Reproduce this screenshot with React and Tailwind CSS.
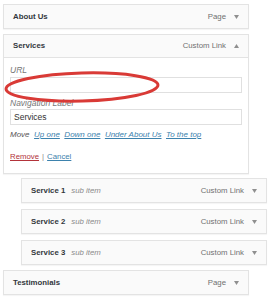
import React from 'react';

const Arrow = ({ up }) => (
  <svg width="5" height="4" viewBox="0 0 5 4" className="ml-[8px]">
    {up ? <path d="M0 4 L2.5 0 L5 4 Z" fill="#8f8f8f" /> : <path d="M0 0 L5 0 L2.5 4 Z" fill="#8f8f8f" />}
  </svg>
);

function ItemBar({ title, sub, type, up, className = '' }) {
  return (
    <div className={`flex h-[23px] items-center justify-between pl-[9px] pr-[9px] ${className}`}>
      <div className="flex items-center">
        <span className="text-[7.8px] font-bold text-[#32373c]">{title}</span>
        {sub && <span className="ml-[6px] text-[7.8px] italic text-[#8a8a8a]">{sub}</span>}
      </div>
      <div className="flex items-center">
        <span className="text-[7.8px] text-[#707070]">{type}</span>
        <Arrow up={up} />
      </div>
    </div>
  );
}

const boxCls = 'border border-[#e3e3e3] bg-[#fafafa] shadow-[0_1px_1px_rgba(0,0,0,0.04)]';

export default function App() {
  return (
    <div className="relative min-h-[300px] bg-white pt-[4px] font-['Liberation_Sans',Arial,sans-serif]">
      <div className={`ml-[3px] w-[246px] ${boxCls}`}>
        <ItemBar title="About Us" type="Page" />
      </div>

      <div className="ml-[3px] mt-[5px] w-[246px] border border-[#e3e3e3] bg-white shadow-[0_1px_1px_rgba(0,0,0,0.04)]">
        <ItemBar title="Services" type="Custom Link" up className="border-b border-[#e3e3e3] bg-[#fafafa]" />
        <div className="px-[6px] pb-[11px] pt-[7px]">
          <div className="h-[10px] text-[8.5px] italic leading-[10px] text-[#777]">URL</div>
          <div className="mt-[2px] h-[16px] w-[232px] border border-[#e0e0e0] bg-white" />
          <div className="mt-[5px] h-[10px] text-[8.5px] italic leading-[10px] text-[#777]">Navigation Label</div>
          <div className="mt-[1px] flex h-[16px] w-[232px] items-center border border-[#e0e0e0] bg-white pl-[3px] text-[8.5px] text-[#333]">
            Services
          </div>
          <div className="mt-[5px] flex h-[10px] items-center gap-[4.5px] text-[8px] italic leading-[10px]">
            <span className="text-[#555]">Move</span>
            <span className="text-[#3d82ad] underline">Up one</span>
            <span className="text-[#3d82ad] underline">Down one</span>
            <span className="text-[#3d82ad] underline">Under About Us</span>
            <span className="text-[#3d82ad] underline">To the top</span>
          </div>
          <div className="mt-[12px] flex h-[10px] items-center text-[7.8px] leading-[10px]">
            <span className="text-[#b3333a] underline">Remove</span>
            <span className="mx-[3px] text-[#888]">|</span>
            <span className="text-[#3d82ad] underline">Cancel</span>
          </div>
        </div>
      </div>

      <div className={`ml-[21px] mt-[4px] w-[246px] ${boxCls}`}>
        <ItemBar title="Service 1" sub="sub item" type="Custom Link" />
      </div>
      <div className={`ml-[21px] mt-[6px] w-[246px] ${boxCls}`}>
        <ItemBar title="Service 2" sub="sub item" type="Custom Link" />
      </div>
      <div className={`ml-[21px] mt-[6px] w-[246px] ${boxCls}`}>
        <ItemBar title="Service 3" sub="sub item" type="Custom Link" />
      </div>
      <div className={`ml-[3px] mt-[5px] w-[246px] ${boxCls}`}>
        <ItemBar title="Testimonials" type="Page" />
      </div>

      <svg className="absolute left-[3px] top-[71px]" width="160" height="32" viewBox="0 0 160 32">
        <ellipse cx="79" cy="16" rx="76" ry="14" fill="none" stroke="#d93a36" strokeWidth="3" transform="rotate(-1.5 79 16)" />
      </svg>
    </div>
  );
}
